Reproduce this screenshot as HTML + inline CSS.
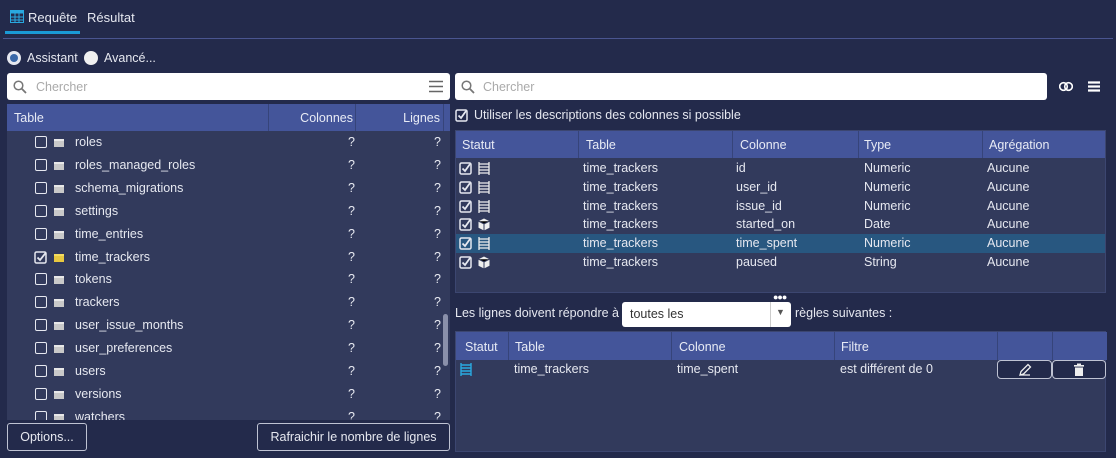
<!DOCTYPE html>
<html><head><meta charset="utf-8"><style>
*{box-sizing:border-box;margin:0;padding:0}
body{width:1116px;height:458px;background:#232a4b;font-family:"Liberation Sans","DejaVu Sans",sans-serif;font-size:12.5px;color:#e6e8f0;position:relative;overflow:hidden}
.abs{position:absolute}
.hdr{background:#44559a;color:#e8ebf5}
.cb{display:inline-block;width:12px;height:12px;border:1.5px solid #e6e8f0;border-radius:2px;position:absolute}
.fold{position:absolute;width:10px;height:8px;background:#c9c9c9;border-top:2px solid #e8e8e8}
.row{position:absolute;left:0;right:0;height:23px;line-height:23px}
.btn{position:absolute;border:1px solid #bfc3d3;border-radius:3px;text-align:center;color:#e6e8f0;background:#232a4b}
.trow{position:absolute;left:0;right:0;height:19px;line-height:19px}
.trow span{position:absolute}
</style></head><body>
<svg class="abs" style="left:10px;top:10px" width="14" height="13"><rect x="0.5" y="0.5" width="13" height="12" fill="none" stroke="#29a9e0"/><rect x="0.5" y="0.5" width="13" height="3" fill="#29a9e0"/><path d="M0 7H14M0 10H14M5 3V13M9 3V13" stroke="#29a9e0"/></svg>
<div class="abs" style="left:28px;top:10px;font-size:13px">Requête</div>
<div class="abs" style="left:87px;top:10px;font-size:13px">Résultat</div>
<div class="abs" style="left:5px;top:31px;width:75px;height:3px;background:#1a9ad6"></div>
<div class="abs" style="left:3px;top:38px;width:1110px;height:1px;background:#4a5590"></div>
<div class="abs" style="left:7px;top:51px;width:14px;height:14px;border-radius:50%;background:#e6e8f0"><div style="margin:3px;width:8px;height:8px;border-radius:50%;background:#3a68a8"></div></div>
<div class="abs" style="left:27px;top:51px">Assistant</div>
<div class="abs" style="left:84px;top:51px;width:14px;height:14px;border-radius:50%;background:#f0f0f0"></div>
<div class="abs" style="left:104px;top:51px">Avancé...</div>
<div class="abs" style="left:7px;top:73px;width:443px;height:27px;background:#fff;border-radius:3px"></div>
<svg class="abs" style="left:13px;top:80px" width="14" height="14"><circle cx="5.5" cy="5.5" r="4.3" fill="none" stroke="#777" stroke-width="1.5"/><path d="M8.8 8.8L13 13" stroke="#777" stroke-width="1.8"/></svg>
<div class="abs" style="left:36px;top:80px;color:#aaa">Chercher</div>
<svg class="abs" style="left:429px;top:80px" width="14" height="13"><path d="M0 1.5H14M0 6.5H14M0 11.5H14" stroke="#666" stroke-width="1.6"/></svg>
<div class="abs" style="left:7px;top:104px;width:443px;height:316px;background:#323a5c;overflow:hidden">
 <div class="hdr abs" style="left:0;top:0;width:443px;height:27px;line-height:28px">
  <span class="abs" style="left:7px">Table</span>
  <span class="abs" style="left:261px;top:0;width:1px;height:27px;background:#36447a"></span>
  <span class="abs" style="left:262px;width:84px;text-align:right">Colonnes</span>
  <span class="abs" style="left:348px;top:0;width:1px;height:27px;background:#36447a"></span>
  <span class="abs" style="left:349px;width:84px;text-align:right">Lignes</span>
  <span class="abs" style="left:436px;top:0;width:1px;height:27px;background:#36447a"></span>
 </div>
 <div class="abs" style="left:436px;top:210px;width:5px;height:52px;border-radius:3px;background:#8a90aa"></div>
 <div id="rows"></div>
</div>
<div class="btn" style="left:7px;top:423px;width:80px;height:28px;line-height:26px">Options...</div>
<div class="btn" style="left:257px;top:423px;width:193px;height:28px;line-height:26px">Rafraichir le nombre de lignes</div>
<div class="abs" style="left:455px;top:73px;width:592px;height:27px;background:#fff;border-radius:3px"></div>
<svg class="abs" style="left:461px;top:80px" width="14" height="14"><circle cx="5.5" cy="5.5" r="4.3" fill="none" stroke="#777" stroke-width="1.5"/><path d="M8.8 8.8L13 13" stroke="#777" stroke-width="1.8"/></svg>
<div class="abs" style="left:483px;top:80px;color:#aaa">Chercher</div>
<svg class="abs" style="left:1059px;top:81px" width="14" height="11"><circle cx="4.5" cy="5.5" r="3.8" fill="none" stroke="#fff" stroke-width="1.6"/><circle cx="9.5" cy="5.5" r="3.8" fill="none" stroke="#fff" stroke-width="1.6"/></svg>
<svg class="abs" style="left:1088px;top:81px" width="12" height="11"><path d="M0 1.5H12M0 5.5H12M0 9.5H12" stroke="#fff" stroke-width="2.2"/></svg>
<svg class="abs" style="left:455px;top:109px" width="13" height="13"><rect x="1" y="1" width="11" height="11" rx="1.5" fill="none" stroke="#e6e8f0" stroke-width="1.5"/><path d="M3.5 6.5L6 9L11 2" fill="none" stroke="#e6e8f0" stroke-width="1.8"/></svg>
<div class="abs" style="left:474px;top:108px">Utiliser les descriptions des colonnes si possible</div>
<div class="abs" style="left:455px;top:130px;width:651px;height:163px;background:#323a5c;border:1px solid #3c4670;overflow:hidden">
 <div class="hdr abs" style="left:0;top:0;width:651px;height:27px;line-height:29px">
  <span class="abs" style="left:6px">Statut</span><span class="abs" style="left:122px;top:0;width:1px;height:27px;background:#36447a"></span>
  <span class="abs" style="left:130px">Table</span><span class="abs" style="left:276px;top:0;width:1px;height:27px;background:#36447a"></span>
  <span class="abs" style="left:284px">Colonne</span><span class="abs" style="left:402px;top:0;width:1px;height:27px;background:#36447a"></span>
  <span class="abs" style="left:408px">Type</span><span class="abs" style="left:526px;top:0;width:1px;height:27px;background:#36447a"></span>
  <span class="abs" style="left:533px">Agrégation</span>
 </div>
 <div id="crow"></div>
</div>
<div class="abs" style="left:455px;top:306px">Les lignes doivent répondre à</div>
<div class="abs" style="left:622px;top:302px;width:169px;height:25px;background:#fff;border-radius:3px;color:#333"><span class="abs" style="left:8px;top:5px">toutes les</span><span class="abs" style="left:148px;top:0;width:1px;height:25px;background:#ccc"></span><span class="abs" style="left:154px;top:5px;font-size:9px;color:#555">▼</span></div>
<div class="abs" style="left:773px;top:292px;font-size:9px;color:#fff;letter-spacing:-1px">●●●</div>
<div class="abs" style="left:795px;top:306px">règles suivantes :</div>
<div class="abs" style="left:455px;top:331px;width:651px;height:121px;background:#323a5c;border:1px solid #3c4670">
 <div class="hdr abs" style="left:0;top:0;width:651px;height:28px;line-height:30px">
  <span class="abs" style="left:9px">Statut</span><span class="abs" style="left:52px;top:0;width:1px;height:28px;background:#36447a"></span>
  <span class="abs" style="left:59px">Table</span><span class="abs" style="left:215px;top:0;width:1px;height:28px;background:#36447a"></span>
  <span class="abs" style="left:223px">Colonne</span><span class="abs" style="left:378px;top:0;width:1px;height:28px;background:#36447a"></span>
  <span class="abs" style="left:385px">Filtre</span><span class="abs" style="left:541px;top:0;width:1px;height:28px;background:#36447a"></span>
  <span class="abs" style="left:596px;top:0;width:1px;height:28px;background:#36447a"></span>
 </div>
 <svg class="abs" style="left:4px;top:31px" width="12" height="13"><path d="M1 0V13M11 0V13M1 2H11M1 5H11M1 8H11M1 11H11" stroke="#29a9e0" stroke-width="1.4"/></svg>
 <span class="abs" style="left:58px;top:30px">time_trackers</span>
 <span class="abs" style="left:221px;top:30px">time_spent</span>
 <span class="abs" style="left:384px;top:30px">est différent de 0</span>
 <div class="btn" style="left:541px;top:28px;width:55px;height:19px;border-radius:4px"><svg width="14" height="14" style="margin-top:2px"><path d="M2 12L3 8.5L10 1.5L12.5 4L5.5 11Z M2 12H12" fill="none" stroke="#eee" stroke-width="1.3"/></svg></div>
 <div class="btn" style="left:596px;top:28px;width:54px;height:19px;border-radius:4px"><svg width="12" height="14" style="margin-top:2px"><rect x="1" y="2" width="10" height="1.6" fill="#eee"/><rect x="4" y="0.5" width="4" height="2" fill="#eee"/><rect x="2" y="4.5" width="8" height="8.5" fill="#eee"/></svg></div>
</div>
<script>
var names=["roles","roles_managed_roles","schema_migrations","settings","time_entries","time_trackers","tokens","trackers","user_issue_months","user_preferences","users","versions","watchers"];
var h="";
names.forEach(function(n,i){var t=27+i*22.9;var chk=n=="time_trackers";
h+='<div class="row" style="top:'+t+'px">'+
(chk?'<svg class="abs" style="left:27px;top:5px" width="14" height="14"><rect x="1" y="1" width="11" height="11" rx="1.5" fill="none" stroke="#e6e8f0" stroke-width="1.5"/><path d="M3.5 6.5L6 9L12 1.5" fill="none" stroke="#e6e8f0" stroke-width="1.8"/></svg>':'<span class="cb" style="left:28px;top:5px"></span>')+
'<span class="fold" style="left:47px;top:8px;'+(chk?'background:#e8c840;border-top-color:#f5dc60':'')+'"></span>'+
'<span class="abs" style="left:68px">'+n+'</span><span class="abs" style="left:341px">?</span><span class="abs" style="left:427px">?</span></div>';});
document.getElementById("rows").innerHTML=h;
var cols=[["id","Numeric",0],["user_id","Numeric",0],["issue_id","Numeric",0],["started_on","Date",1],["time_spent","Numeric",0],["paused","String",1]];
var g="";
cols.forEach(function(c,i){var t=28+i*18.8;
var ic=c[2]?'<svg class="abs" style="left:22px;top:3px" width="12" height="13"><path d="M6 0.5L11.5 3.2V9.8L6 12.5L0.5 9.8V3.2Z" fill="#eee"/><path d="M0.5 3.2L6 6L11.5 3.2M6 6V12.5" stroke="#323a5c" stroke-width="1"/></svg>':'<svg class="abs" style="left:22px;top:3px" width="12" height="13"><path d="M1 0V13M11 0V13M1 2H11M1 5H11M1 8H11M1 11H11" stroke="#eee" stroke-width="1.3"/></svg>';
g+='<div class="trow" style="top:'+t+'px;'+(i==4?'background:#285780':'')+'"><svg class="abs" style="left:3px;top:3px" width="13" height="13"><rect x="1" y="1" width="11" height="11" rx="1.5" fill="none" stroke="#e6e8f0" stroke-width="1.5"/><path d="M3.5 6.5L6 9L11 2" fill="none" stroke="#e6e8f0" stroke-width="1.8"/></svg>'+ic+
'<span style="left:127px">time_trackers</span><span style="left:280px">'+c[0]+'</span><span style="left:408px">'+c[1]+'</span><span style="left:531px">Aucune</span></div>';});
document.getElementById("crow").innerHTML=g;
</script>
</body></html>
